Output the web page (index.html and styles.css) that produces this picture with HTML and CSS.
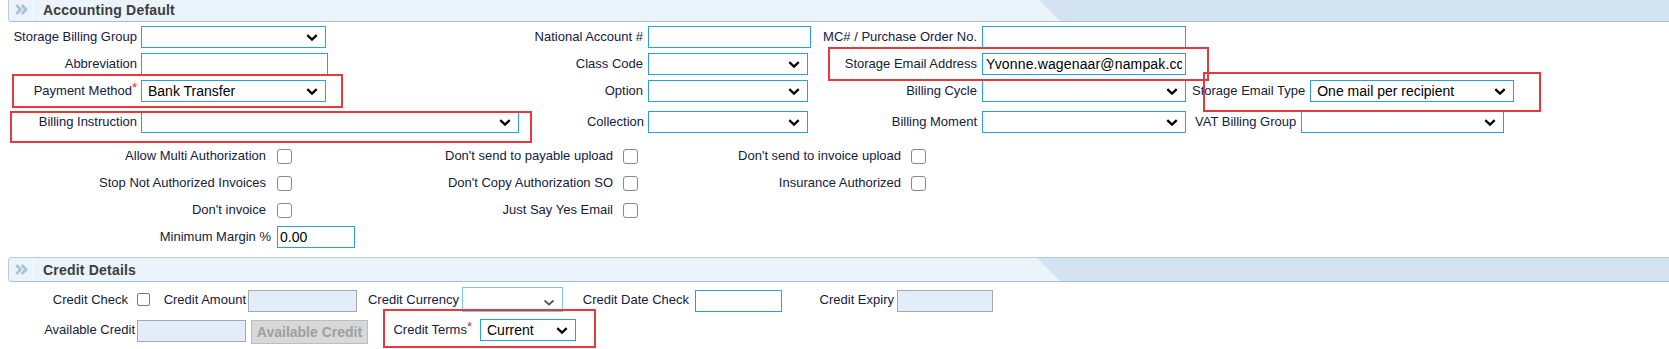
FILE: index.html
```html
<!DOCTYPE html>
<html lang="en">

<head>
    <meta charset="UTF-8" />
    <title>Accounting Default</title>
    <link rel="stylesheet" href="styles.css">
</head>

<body>
    <div class="page">
        <div class="section-head first">
            <span class="head-icon">
                <svg viewBox="0 0 13 11" width="13" height="11"><polyline points="1.3,1 5.5,5.5 1.3,10" /><polyline points="6.8,1 11,5.5 6.8,10" /></svg>
            </span>
            <span class="head-title">Accounting Default</span>
        </div>

        <div class="field-grid">
            <label class="lbl">Storage Billing Group</label>
            <div class="select w185"><span></span><svg viewBox="0 0 12 7"><polyline points="1.3,1.2 6,5.6 10.7,1.2" /></svg></div>
            <label class="lbl wide">National Account #</label>
            <input class="txt w163" type="text">
            <label class="lbl wide">MC# / Purchase Order No.</label>
            <input class="txt w204" type="text">
            <span></span>

            <label class="lbl">Abbreviation</label>
            <input class="txt w187" type="text">
            <label class="lbl wide">Class Code</label>
            <div class="select w160"><span></span><svg viewBox="0 0 12 7"><polyline points="1.3,1.2 6,5.6 10.7,1.2" /></svg></div>
            <label class="lbl wide">Storage Email Address</label>
            <input class="txt w204 email" type="text" value="Yvonne.wagenaar@nampak.cc">
            <span></span>

            <label class="lbl">Payment Method<span class="req">*</span></label>
            <div class="select w185"><span>Bank Transfer</span><svg viewBox="0 0 12 7"><polyline points="1.3,1.2 6,5.6 10.7,1.2" /></svg></div>
            <label class="lbl wide">Option</label>
            <div class="select w160"><span></span><svg viewBox="0 0 12 7"><polyline points="1.3,1.2 6,5.6 10.7,1.2" /></svg></div>
            <label class="lbl wide">Billing Cycle</label>
            <div class="select w204"><span></span><svg viewBox="0 0 12 7"><polyline points="1.3,1.2 6,5.6 10.7,1.2" /></svg></div>
            <div class="extra">
                <label class="lbl-plain">Storage Email Type</label>
                <div class="select w204"><span>One mail per recipient</span><svg viewBox="0 0 12 7"><polyline points="1.3,1.2 6,5.6 10.7,1.2" /></svg></div>
            </div>

            <label class="lbl">Billing Instruction</label>
            <div class="pair">
                <div class="select w378"><span></span><svg viewBox="0 0 12 7"><polyline points="1.3,1.2 6,5.6 10.7,1.2" /></svg></div>
                <label class="lbl grow">Collection</label>
            </div>
            <div class="select w160"><span></span><svg viewBox="0 0 12 7"><polyline points="1.3,1.2 6,5.6 10.7,1.2" /></svg></div>
            <label class="lbl wide">Billing Moment</label>
            <div class="select w204"><span></span><svg viewBox="0 0 12 7"><polyline points="1.3,1.2 6,5.6 10.7,1.2" /></svg></div>
            <div class="extra vat">
                <label class="lbl-plain">VAT Billing Group</label>
                <div class="select w203"><span></span><svg viewBox="0 0 12 7"><polyline points="1.3,1.2 6,5.6 10.7,1.2" /></svg></div>
            </div>
        </div>

        <div class="check-grid">
            <label class="lbl c1">Allow Multi Authorization</label>
            <input class="cb" type="checkbox">
            <label class="lbl c2">Don't send to payable upload</label>
            <input class="cb" type="checkbox">
            <label class="lbl c2">Don't send to invoice upload</label>
            <input class="cb" type="checkbox">

            <label class="lbl c1">Stop Not Authorized Invoices</label>
            <input class="cb" type="checkbox">
            <label class="lbl c2">Don't Copy Authorization SO</label>
            <input class="cb" type="checkbox">
            <label class="lbl c2">Insurance Authorized</label>
            <input class="cb" type="checkbox">

            <label class="lbl c1">Don't invoice</label>
            <input class="cb" type="checkbox">
            <label class="lbl c2">Just Say Yes Email</label>
            <input class="cb" type="checkbox">
            <span></span>
            <span></span>

            <label class="lbl cm">Minimum Margin %</label>
            <input class="txt margin-input" type="text" value="0.00">
        </div>

        <div class="section-head second">
            <span class="head-icon">
                <svg viewBox="0 0 13 11" width="13" height="11"><polyline points="1.3,1 5.5,5.5 1.3,10" /><polyline points="6.8,1 11,5.5 6.8,10" /></svg>
            </span>
            <span class="head-title">Credit Details</span>
        </div>

        <div class="credit-row r1">
            <label class="cl w120">Credit Check</label>
            <input class="cb small" type="checkbox">
            <label class="cl w83">Credit Amount</label>
            <input class="txt off w109 ml2 mt2" type="text">
            <label class="cl w102">Credit Currency</label>
            <div class="select light w101 ml3"><span></span><svg viewBox="0 0 12 7"><polyline points="1.5,1.5 6,5.5 10.5,1.5" /></svg></div>
            <label class="cl w126">Credit Date Check</label>
            <input class="txt w87 ml6 mt2" type="text">
            <label class="cl w112">Credit Expiry</label>
            <input class="txt off w96 ml3 mt2" type="text">
        </div>

        <div class="credit-row r2">
            <label class="cl w127">Available Credit</label>
            <input class="txt off w109 ml2 mt1" type="text">
            <button class="btn-off" type="button">Available Credit</button>
            <label class="cl w106">Credit Terms<span class="req">*</span></label>
            <div class="select w96 ml6"><span>Current</span><svg viewBox="0 0 12 7"><polyline points="1.3,1.2 6,5.6 10.7,1.2" /></svg></div>
        </div>

        <!-- highlight boxes drawn over the form -->
        <div class="mark m-pay"></div>
        <div class="mark m-instr"></div>
        <div class="mark m-email"></div>
        <div class="mark m-type"></div>
        <div class="mark m-terms"></div>
    </div>
</body>

</html>
```

FILE: styles.css
```css
* {
    box-sizing: border-box;
}

body {
    margin: 0;
    font-family: "Liberation Sans", Arial, sans-serif;
    font-size: 13px;
    color: #14213b;
    background: #fff;
    overflow: hidden;
}

.page {
    display: flow-root;
    position: relative;
    padding-left: 8px;
    height: 349px;
}

/* section header bar */
.section-head {
    position: relative;
    display: flex;
    align-items: center;
    height: 25px;
    background: #d3e3f2;
    border: 1px solid #b7cadd;
    border-right: none;
    border-bottom-color: #a9bed4;
    border-radius: 4px 0 0 4px;
    overflow: hidden;
}

.section-head::before {
    content: "";
    position: absolute;
    left: 0;
    top: 0;
    bottom: 0;
    width: 1052px;
    background: #ebf3fb;
    clip-path: polygon(0 0, 1028px 0, 1051px 100%, 0 100%);
}

.section-head.first {
    margin-top: -3px;
}

.section-head.second {
    margin-top: 9px;
}

.head-icon {
    position: relative;
    display: flex;
    align-items: center;
    justify-content: center;
    width: 25px;
    height: 100%;
    border-right: 1px solid #fff;
}

.head-icon polyline {
    fill: none;
    stroke: #a6c4d3;
    stroke-width: 2.8;
}

.head-title {
    position: relative;
    margin-left: 9px;
    font-size: 14px;
    font-weight: bold;
    letter-spacing: 0.2px;
    color: #3d3d3d;
}

/* top field table */
.field-grid {
    display: grid;
    grid-template-columns: 133px 187px 320px 163px 171px 204px 1fr;
    grid-template-rows: 22px 22px 22px 26px;
    row-gap: 5px;
    margin-top: 4px;
    align-items: end;
}

.lbl {
    display: block;
    height: 22px;
    line-height: 22px;
    text-align: right;
    white-space: nowrap;
    padding-right: 4px;
}

.lbl.wide {
    padding-right: 5px;
}

.lbl-plain {
    line-height: 22px;
    white-space: nowrap;
}

.req {
    color: #e3262b;
    vertical-align: 3px;
    line-height: 1;
}

.extra {
    display: flex;
    gap: 5px;
    padding-left: 6px;
}

.extra.vat {
    padding-left: 9px;
}

.pair {
    grid-column: span 2;
    display: flex;
}

.grow {
    flex: 1;
}

.select {
    display: flex;
    align-items: center;
    justify-content: space-between;
    flex: none;
    height: 22px;
    padding: 0 7px 0 6px;
    border: 1px solid #2a9fd8;
    background: #fff;
    color: #000;
    font-size: 14px;
    white-space: nowrap;
}

.select svg {
    width: 12px;
    height: 7px;
    flex: none;
}

.select polyline {
    fill: none;
    stroke: #000;
    stroke-width: 2.3;
}

.select.light {
    height: 25px;
    border-color: #7cc8eb;
}

.select.light svg {
    margin-top: 5px;
}

.select.light polyline {
    stroke: #555;
    stroke-width: 1.7;
}

.txt {
    display: block;
    flex: none;
    height: 22px;
    margin: 0;
    padding: 0 3px;
    border: 1px solid #2a9fd8;
    border-radius: 0;
    background: #fff;
    color: #000;
    font: 14px "Liberation Sans", Arial, sans-serif;
    outline: none;
}

.txt.email {
    letter-spacing: 0.15px;
}

.txt.off {
    background: #e1edf9;
    border-color: #a8a8a8;
}

.w87 { width: 87px; }
.w96 { width: 96px; }
.w101 { width: 101px; }
.w109 { width: 109px; }
.w160 { width: 160px; }
.w163 { width: 163px; }
.w185 { width: 185px; }
.w187 { width: 187px; }
.w203 { width: 203px; }
.w204 { width: 204px; }
.w378 { width: 378px; }

.ml2 { margin-left: 2px; }
.ml3 { margin-left: 3px; }
.ml6 { margin-left: 6px; }
.mt1 { margin-top: 1px; }
.mt2 { margin-top: 2px; }

/* checkbox table */
.check-grid {
    display: grid;
    grid-template-columns: 268px 16px 330px 16px 272px 16px;
    grid-auto-rows: 22px;
    row-gap: 5px;
    margin-top: 12px;
    align-items: center;
}

.check-grid .c1 {
    padding-right: 10px;
}

.check-grid .c2 {
    padding-right: 9px;
}

.check-grid .cm {
    padding-right: 5px;
}

.cb {
    appearance: none;
    -webkit-appearance: none;
    display: block;
    width: 15px;
    height: 15px;
    margin: 0 0 0 1px;
    border: 1px solid #8a8a8a;
    border-radius: 3px;
    background: #fff;
}

.cb.small {
    width: 13px;
    height: 13px;
    margin: 0 13px 0 9px;
    border-radius: 2px;
    border-color: #7a7a7a;
}

.margin-input {
    grid-column: span 2;
    width: 78px;
    margin-left: 1px;
    padding-left: 2px;
}

/* credit details */
.credit-row {
    display: flex;
    align-items: center;
    height: 25px;
}

.credit-row.r1 {
    margin-top: 5px;
}

.credit-row.r2 {
    margin-top: 7px;
    align-items: flex-start;
}

.credit-row.r2 .cl {
    line-height: 22px;
}

.cl {
    flex: none;
    text-align: right;
    white-space: nowrap;
}

.cl.w106 {
    padding-right: 2px;
}

.w83 { width: 83px; }
.w102 { width: 102px; }
.w106 { width: 106px; }
.w112 { width: 112px; }
.w120 { width: 120px; }
.w126 { width: 126px; }
.w127 { width: 127px; }

.btn-off {
    flex: none;
    width: 117px;
    height: 24px;
    margin: 1px 0 0 5px;
    padding: 0;
    background: #d8d8d8;
    border: 1px solid #bdbdbd;
    color: #9f9f9f;
    font: bold 14px "Liberation Sans", Arial, sans-serif;
}

/* red highlight boxes */
.mark {
    position: absolute;
    border: 2px solid #e5393e;
    pointer-events: none;
}

.m-pay {
    left: 12px;
    top: 74px;
    width: 331px;
    height: 34px;
}

.m-instr {
    left: 10px;
    top: 111px;
    width: 522px;
    height: 32px;
}

.m-email {
    left: 828px;
    top: 47px;
    width: 381px;
    height: 34px;
}

.m-type {
    left: 1203px;
    top: 72px;
    width: 338px;
    height: 40px;
}

.m-terms {
    left: 383px;
    top: 309px;
    width: 213px;
    height: 39px;
}
```
